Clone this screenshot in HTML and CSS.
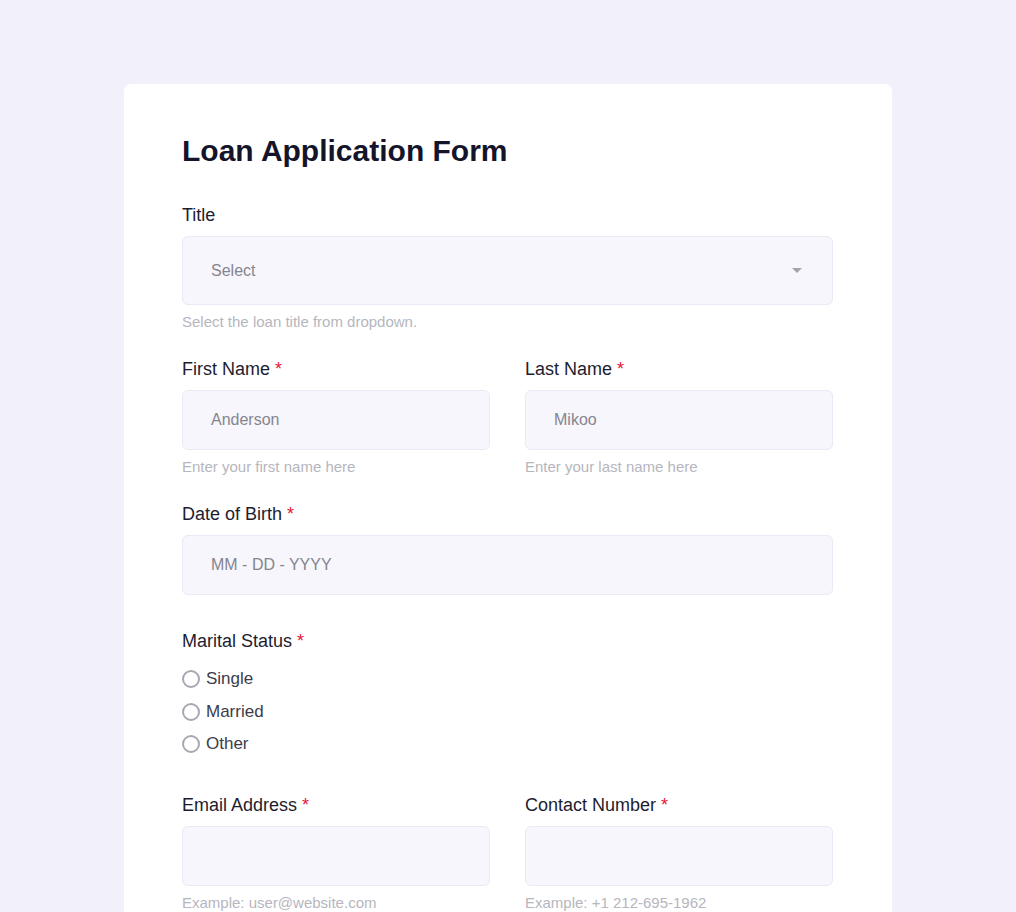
FILE: index.html
```html
<!DOCTYPE html>
<html lang="en">
<head>
<meta charset="utf-8">
<title>Loan Application Form</title>
<link rel="stylesheet" href="styles.css">
</head>
<body>
<main class="card">
  <h1 class="form-title">Loan Application Form</h1>

  <div class="field">
    <label class="label">Title</label>
    <div class="select">
      <span class="select-text">Select</span>
      <span class="caret"></span>
    </div>
    <p class="help">Select the loan title from dropdown.</p>
  </div>

  <div class="row field">
    <div class="col">
      <label class="label">First Name <span class="req">*</span></label>
      <div class="input"><span class="value">Anderson</span></div>
      <p class="help">Enter your first name here</p>
    </div>
    <div class="col">
      <label class="label">Last Name <span class="req">*</span></label>
      <div class="input"><span class="value">Mikoo</span></div>
      <p class="help">Enter your last name here</p>
    </div>
  </div>

  <div class="field field-plain">
    <label class="label">Date of Birth <span class="req">*</span></label>
    <div class="input"><span class="value">MM - DD - YYYY</span></div>
  </div>

  <div class="field field-radios">
    <label class="label">Marital Status <span class="req">*</span></label>
    <div class="radios">
      <div class="radio"><span class="dot"></span><span>Single</span></div>
      <div class="radio"><span class="dot"></span><span>Married</span></div>
      <div class="radio"><span class="dot"></span><span>Other</span></div>
    </div>
  </div>

  <div class="row field">
    <div class="col">
      <label class="label">Email Address <span class="req">*</span></label>
      <div class="input"></div>
      <p class="help">Example: user@website.com</p>
    </div>
    <div class="col">
      <label class="label">Contact Number <span class="req">*</span></label>
      <div class="input"></div>
      <p class="help">Example: +1 212-695-1962</p>
    </div>
  </div>
</main>
</body>
</html>
```

FILE: styles.css
```css
* { box-sizing: border-box; }

html, body {
  margin: 0;
  background: #f2f1fb;
  font-family: "Liberation Sans", Arial, sans-serif;
  color: #1b1b2c;
}

.card {
  width: 768px;
  margin: 84px auto 0;
  background: #ffffff;
  border-radius: 7px;
  padding: 49px 59px 60px 58px;
  min-height: 900px;
}

.form-title {
  margin: 0 0 35px;
  font-size: 30px;
  line-height: 36px;
  font-weight: 700;
  color: #14142b;
}

.field { margin-bottom: 26px; }
.field-plain { margin-bottom: 35px; }
.field-radios { margin-bottom: 33px; }

.row {
  display: grid;
  grid-template-columns: 1fr 1fr;
  column-gap: 35px;
}

.label {
  display: block;
  font-size: 18px;
  line-height: 22px;
  margin-bottom: 10px;
  color: #1d1d2f;
}

.req { color: #e3173a; }

.select,
.input {
  display: flex;
  align-items: center;
  height: 60px;
  background: #f7f6fc;
  border: 1px solid #ebe9f3;
  border-radius: 6px;
  padding: 0 30px 0 28px;
  font-size: 16px;
  color: #85858f;
}

.select {
  height: 69px;
  justify-content: space-between;
}

.caret {
  width: 0;
  height: 0;
  border-left: 5px solid transparent;
  border-right: 5px solid transparent;
  border-top: 5px solid #a3a3ad;
}

.help {
  margin: 7px 0 0;
  font-size: 15px;
  line-height: 20px;
  color: #b6b6be;
}

.radios {
  display: flex;
  flex-direction: column;
  margin-top: 11px;
}

.radio {
  display: flex;
  align-items: center;
  gap: 6px;
  height: 32.5px;
  font-size: 17px;
  color: #3c3c4a;
}

.dot {
  width: 18px;
  height: 18px;
  border: 2px solid #a8a8b3;
  border-radius: 50%;
  background: #ffffff;
}
```
